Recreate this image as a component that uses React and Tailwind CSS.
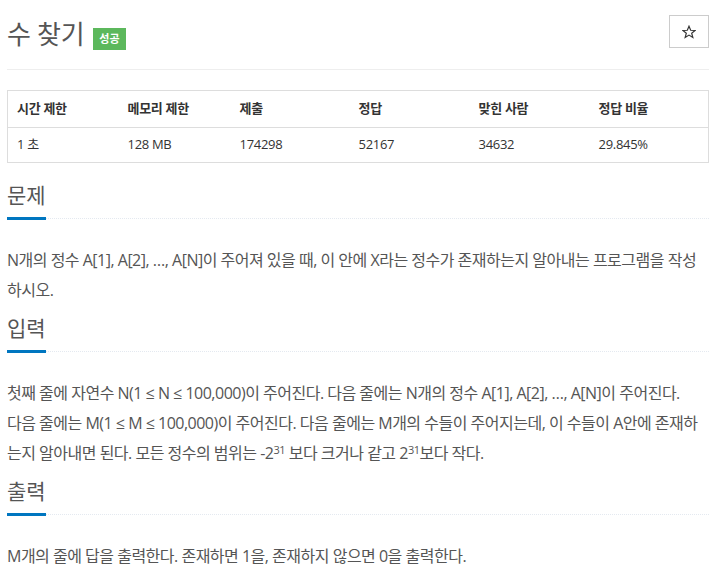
export default function App() {
  const info = [
    { label: '시간 제한', value: '1 초', w: 'w-[111px]' },
    { label: '메모리 제한', value: '128 MB', w: 'w-[112px]' },
    { label: '제출', value: '174298', w: 'w-[119px]' },
    { label: '정답', value: '52167', w: 'w-[120px]' },
    { label: '맞힌 사람', value: '34632', w: 'w-[120px]' },
    { label: '정답 비율', value: '29.845%', w: '' },
  ]

  return (
    <div className="min-h-screen bg-white pl-[7px] pr-[9px] text-[#555] font-['Open_Sans','Noto_Sans_CJK_KR',sans-serif]">
      {/* Header */}
      <div className="flex justify-between items-start h-[70px] border-b border-[#eee]">
        <div className="flex items-end gap-[9px] mt-[17px]">
          <h1 className="text-[26px] leading-[34px] tracking-[-0.3px] text-[#555]">수 찾기</h1>
          <span className="mb-[1px] h-[22px] px-[6px] flex items-center bg-[#5cb85c] text-white text-[11px] font-bold">
            성공
          </span>
        </div>
        <button className="mt-[15px] w-[40px] h-[33px] border border-[#ccc] bg-white flex items-center justify-center">
          <svg width="14" height="14" viewBox="0 0 24 24" fill="none" stroke="#333" strokeWidth="2" strokeLinejoin="miter">
            <polygon points="12,2 14.9,9 22.5,9.3 16.6,14.1 18.6,21.5 12,17.3 5.4,21.5 7.4,14.1 1.5,9.3 9.1,9" />
          </svg>
        </button>
      </div>

      {/* Problem info */}
      <table className="mt-[20px] w-full border border-[#ddd] text-[13px] tracking-[-0.3px] text-[#333] border-collapse">
        <thead>
          <tr className="h-[37px] border-b border-[#ddd]">
            {info.map((c) => (
              <th key={c.label} className={`${c.w} pl-[9px] text-left font-bold`}>
                {c.label}
              </th>
            ))}
          </tr>
        </thead>
        <tbody>
          <tr className="h-[35px]">
            {info.map((c) => (
              <td key={c.label} className="pl-[9px] text-left">
                {c.value}
              </td>
            ))}
          </tr>
        </tbody>
      </table>

      {/* 문제 */}
      <Section title="문제" first>
        N개의 정수 A[1], A[2], …, A[N]이 주어져 있을 때, 이 안에 X라는 정수가 존재하는지 알아내는 프로그램을 작성
        <br />
        하시오.
      </Section>

      {/* 입력 */}
      <Section title="입력">
        첫째 줄에 자연수 N(1 ≤ N ≤ 100,000)이 주어진다. 다음 줄에는 N개의 정수 A[1], A[2], …, A[N]이 주어진다.
        <br />
        다음 줄에는 M(1 ≤ M ≤ 100,000)이 주어진다. 다음 줄에는 M개의 수들이 주어지는데, 이 수들이 A안에 존재하
        <br />
        는지 알아내면 된다. 모든 정수의 범위는 -2<sup className="text-[11px] leading-none">31</sup> 보다 크거나 같고 2
        <sup className="text-[11px] leading-none">31</sup>보다 작다.
      </Section>

      {/* 출력 */}
      <Section title="출력">
        M개의 줄에 답을 출력한다. 존재하면 1을, 존재하지 않으면 0을 출력한다.
      </Section>
    </div>
  )
}

function Section({ title, first, children }) {
  return (
    <div className={first ? 'mt-[19px]' : 'mt-[10px]'}>
      <div className="flex border-b border-dotted border-[#e4e9f0]">
        <h2 className="text-[21px] leading-[26px] pb-[9px] -mb-[2px] border-b-[3px] border-[#0076c0] text-[#555]">
          {title}
        </h2>
      </div>
      <p className="mt-[26px] text-[16px] leading-[30px] tracking-[-0.5px] whitespace-nowrap text-[#555]">{children}</p>
    </div>
  )
}
